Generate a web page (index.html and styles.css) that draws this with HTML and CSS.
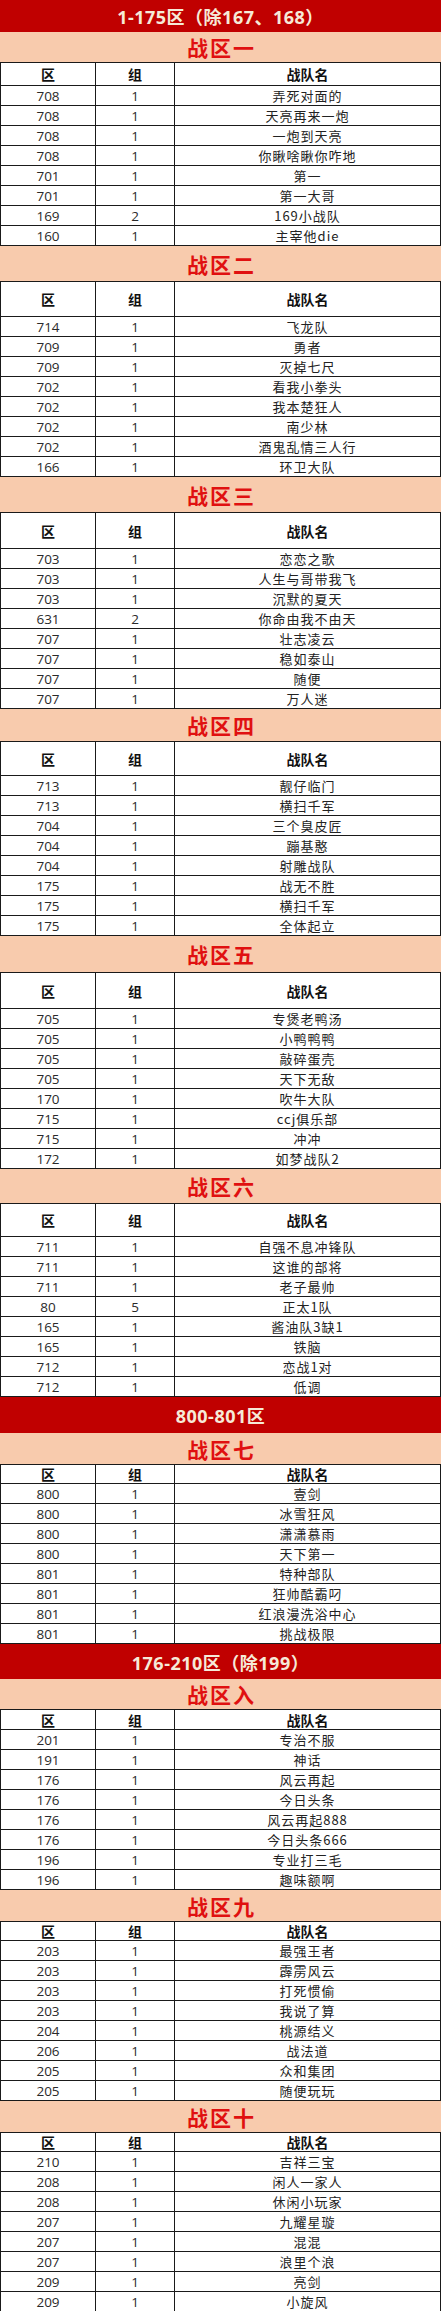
FILE: index.html
```html
<!DOCTYPE html>
<html lang="zh">
<head>
<meta charset="utf-8">
<title>战区分组</title>
<link rel="stylesheet" href="styles.css">
</head>
<body>
<div class="page">
  <div class="zone z32">1-175区（除167、168）</div>

  <section class="war">
    <div class="war-title p30">战区一</div>
    <div class="row head h24"><span>区</span><span>组</span><span>战队名</span></div>
    <div class="row"><span class="num">708</span><span class="num">1</span><span class="name">弄死对面的</span></div>
    <div class="row"><span class="num">708</span><span class="num">1</span><span class="name">天亮再来一炮</span></div>
    <div class="row"><span class="num">708</span><span class="num">1</span><span class="name">一炮到天亮</span></div>
    <div class="row"><span class="num">708</span><span class="num">1</span><span class="name">你瞅啥瞅你咋地</span></div>
    <div class="row"><span class="num">701</span><span class="num">1</span><span class="name">第一</span></div>
    <div class="row"><span class="num">701</span><span class="num">1</span><span class="name">第一大哥</span></div>
    <div class="row"><span class="num">169</span><span class="num">2</span><span class="name">169小战队</span></div>
    <div class="row"><span class="num">160</span><span class="num">1</span><span class="name">主宰他die</span></div>
  </section>

  <section class="war">
    <div class="war-title p35">战区二</div>
    <div class="row head h36"><span>区</span><span>组</span><span>战队名</span></div>
    <div class="row"><span class="num">714</span><span class="num">1</span><span class="name">飞龙队</span></div>
    <div class="row"><span class="num">709</span><span class="num">1</span><span class="name">勇者</span></div>
    <div class="row"><span class="num">709</span><span class="num">1</span><span class="name">灭掉七尺</span></div>
    <div class="row"><span class="num">702</span><span class="num">1</span><span class="name">看我小拳头</span></div>
    <div class="row"><span class="num">702</span><span class="num">1</span><span class="name">我本楚狂人</span></div>
    <div class="row"><span class="num">702</span><span class="num">1</span><span class="name">南少林</span></div>
    <div class="row"><span class="num">702</span><span class="num">1</span><span class="name">酒鬼乱情三人行</span></div>
    <div class="row"><span class="num">166</span><span class="num">1</span><span class="name">环卫大队</span></div>
  </section>

  <section class="war">
    <div class="war-title p35">战区三</div>
    <div class="row head h37"><span>区</span><span>组</span><span>战队名</span></div>
    <div class="row"><span class="num">703</span><span class="num">1</span><span class="name">恋恋之歌</span></div>
    <div class="row"><span class="num">703</span><span class="num">1</span><span class="name">人生与哥带我飞</span></div>
    <div class="row"><span class="num">703</span><span class="num">1</span><span class="name">沉默的夏天</span></div>
    <div class="row"><span class="num">631</span><span class="num">2</span><span class="name">你命由我不由天</span></div>
    <div class="row"><span class="num">707</span><span class="num">1</span><span class="name">壮志凌云</span></div>
    <div class="row"><span class="num">707</span><span class="num">1</span><span class="name">稳如泰山</span></div>
    <div class="row"><span class="num">707</span><span class="num">1</span><span class="name">随便</span></div>
    <div class="row"><span class="num">707</span><span class="num">1</span><span class="name">万人迷</span></div>
  </section>

  <section class="war">
    <div class="war-title p32">战区四</div>
    <div class="row head h35"><span>区</span><span>组</span><span>战队名</span></div>
    <div class="row"><span class="num">713</span><span class="num">1</span><span class="name">靓仔临门</span></div>
    <div class="row"><span class="num">713</span><span class="num">1</span><span class="name">横扫千军</span></div>
    <div class="row"><span class="num">704</span><span class="num">1</span><span class="name">三个臭皮匠</span></div>
    <div class="row"><span class="num">704</span><span class="num">1</span><span class="name">蹦基憨</span></div>
    <div class="row"><span class="num">704</span><span class="num">1</span><span class="name">射雕战队</span></div>
    <div class="row"><span class="num">175</span><span class="num">1</span><span class="name">战无不胜</span></div>
    <div class="row"><span class="num">175</span><span class="num">1</span><span class="name">横扫千军</span></div>
    <div class="row"><span class="num">175</span><span class="num">1</span><span class="name">全体起立</span></div>
  </section>

  <section class="war">
    <div class="war-title p36">战区五</div>
    <div class="row head h37"><span>区</span><span>组</span><span>战队名</span></div>
    <div class="row"><span class="num">705</span><span class="num">1</span><span class="name">专煲老鸭汤</span></div>
    <div class="row"><span class="num">705</span><span class="num">1</span><span class="name">小鸭鸭鸭</span></div>
    <div class="row"><span class="num">705</span><span class="num">1</span><span class="name">敲碎蛋壳</span></div>
    <div class="row"><span class="num">705</span><span class="num">1</span><span class="name">天下无敌</span></div>
    <div class="row"><span class="num">170</span><span class="num">1</span><span class="name">吹牛大队</span></div>
    <div class="row"><span class="num">715</span><span class="num">1</span><span class="name">ccj俱乐部</span></div>
    <div class="row"><span class="num">715</span><span class="num">1</span><span class="name">冲冲</span></div>
    <div class="row"><span class="num">172</span><span class="num">1</span><span class="name">如梦战队2</span></div>
  </section>

  <section class="war">
    <div class="war-title p34">战区六</div>
    <div class="row head h34"><span>区</span><span>组</span><span>战队名</span></div>
    <div class="row"><span class="num">711</span><span class="num">1</span><span class="name">自强不息冲锋队</span></div>
    <div class="row"><span class="num">711</span><span class="num">1</span><span class="name">这谁的部将</span></div>
    <div class="row"><span class="num">711</span><span class="num">1</span><span class="name">老子最帅</span></div>
    <div class="row"><span class="num">80</span><span class="num">5</span><span class="name">正太1队</span></div>
    <div class="row"><span class="num">165</span><span class="num">1</span><span class="name">酱油队3缺1</span></div>
    <div class="row"><span class="num">165</span><span class="num">1</span><span class="name">铁脑</span></div>
    <div class="row"><span class="num">712</span><span class="num">1</span><span class="name">恋战1对</span></div>
    <div class="row"><span class="num">712</span><span class="num">1</span><span class="name">低调</span></div>
  </section>

  <div class="zone z36">800-801区</div>

  <section class="war">
    <div class="war-title p31">战区七</div>
    <div class="row head h20"><span>区</span><span>组</span><span>战队名</span></div>
    <div class="row"><span class="num">800</span><span class="num">1</span><span class="name">壹剑</span></div>
    <div class="row"><span class="num">800</span><span class="num">1</span><span class="name">冰雪狂风</span></div>
    <div class="row"><span class="num">800</span><span class="num">1</span><span class="name">潇潇慕雨</span></div>
    <div class="row"><span class="num">800</span><span class="num">1</span><span class="name">天下第一</span></div>
    <div class="row"><span class="num">801</span><span class="num">1</span><span class="name">特种部队</span></div>
    <div class="row"><span class="num">801</span><span class="num">1</span><span class="name">狂帅酷霸叼</span></div>
    <div class="row"><span class="num">801</span><span class="num">1</span><span class="name">红浪漫洗浴中心</span></div>
    <div class="row"><span class="num">801</span><span class="num">1</span><span class="name">挑战极限</span></div>
  </section>

  <div class="zone z35">176-210区（除199）</div>

  <section class="war">
    <div class="war-title p30">战区入</div>
    <div class="row head h21"><span>区</span><span>组</span><span>战队名</span></div>
    <div class="row"><span class="num">201</span><span class="num">1</span><span class="name">专治不服</span></div>
    <div class="row"><span class="num">191</span><span class="num">1</span><span class="name">神话</span></div>
    <div class="row"><span class="num">176</span><span class="num">1</span><span class="name">风云再起</span></div>
    <div class="row"><span class="num">176</span><span class="num">1</span><span class="name">今日头条</span></div>
    <div class="row"><span class="num">176</span><span class="num">1</span><span class="name">风云再起888</span></div>
    <div class="row"><span class="num">176</span><span class="num">1</span><span class="name">今日头条666</span></div>
    <div class="row"><span class="num">196</span><span class="num">1</span><span class="name">专业打三毛</span></div>
    <div class="row"><span class="num">196</span><span class="num">1</span><span class="name">趣味额啊</span></div>
  </section>

  <section class="war">
    <div class="war-title p31">战区九</div>
    <div class="row head h20"><span>区</span><span>组</span><span>战队名</span></div>
    <div class="row"><span class="num">203</span><span class="num">1</span><span class="name">最强王者</span></div>
    <div class="row"><span class="num">203</span><span class="num">1</span><span class="name">霹雳风云</span></div>
    <div class="row"><span class="num">203</span><span class="num">1</span><span class="name">打死惯偷</span></div>
    <div class="row"><span class="num">203</span><span class="num">1</span><span class="name">我说了算</span></div>
    <div class="row"><span class="num">204</span><span class="num">1</span><span class="name">桃源结义</span></div>
    <div class="row"><span class="num">206</span><span class="num">1</span><span class="name">战法道</span></div>
    <div class="row"><span class="num">205</span><span class="num">1</span><span class="name">众和集团</span></div>
    <div class="row"><span class="num">205</span><span class="num">1</span><span class="name">随便玩玩</span></div>
  </section>

  <section class="war">
    <div class="war-title p31">战区十</div>
    <div class="row head h20"><span>区</span><span>组</span><span>战队名</span></div>
    <div class="row"><span class="num">210</span><span class="num">1</span><span class="name">吉祥三宝</span></div>
    <div class="row"><span class="num">208</span><span class="num">1</span><span class="name">闲人一家人</span></div>
    <div class="row"><span class="num">208</span><span class="num">1</span><span class="name">休闲小玩家</span></div>
    <div class="row"><span class="num">207</span><span class="num">1</span><span class="name">九耀星璇</span></div>
    <div class="row"><span class="num">207</span><span class="num">1</span><span class="name">混混</span></div>
    <div class="row"><span class="num">207</span><span class="num">1</span><span class="name">浪里个浪</span></div>
    <div class="row"><span class="num">209</span><span class="num">1</span><span class="name">亮剑</span></div>
    <div class="row"><span class="num">209</span><span class="num">1</span><span class="name">小旋风</span></div>
  </section>
</div>
</body>
</html>
```

FILE: styles.css
```css
html, body {
  margin: 0;
  padding: 0;
  background: #ffffff;
}

.page {
  width: 441px;
  font-family: "Noto Sans CJK SC", "Noto Sans", sans-serif;
  color: #222;
}

.zone {
  background: #c00000;
  color: #f6ead8;
  font-family: "Open Sans", "Noto Sans CJK SC", sans-serif;
  font-weight: 700;
  font-size: 18px;
  letter-spacing: 0.5px;
  display: flex;
  align-items: center;
  justify-content: center;
}

.z32 { height: 32px; }
.z35 { height: 35px; }
.z36 { height: 36px; }

.war-title {
  background: #f8cbad;
  color: #e01010;
  font-family: "Noto Sans CJK SC", sans-serif;
  font-weight: 700;
  font-size: 21px;
  letter-spacing: 2px;
  display: flex;
  align-items: center;
  justify-content: center;
  padding-left: 2px;
  box-sizing: border-box;
}

.p30 { height: 30px; }
.p31 { height: 31px; }
.p32 { height: 32px; }
.p34 { height: 34px; }
.p35 { height: 35px; }
.p36 { height: 36px; }

.row {
  display: grid;
  grid-template-columns: 95px 79px 1fr;
  height: 20px;
  box-sizing: border-box;
  border-left: 1px solid #1a1a1a;
  border-right: 1px solid #1a1a1a;
  border-bottom: 1px solid #1a1a1a;
}

.row > span {
  display: flex;
  align-items: center;
  justify-content: center;
  white-space: nowrap;
  overflow: hidden;
}

.row > span:nth-child(1),
.row > span:nth-child(2) {
  border-right: 1px solid #1a1a1a;
}

.head {
  border-top: 1px solid #1a1a1a;
  font-weight: 700;
  font-size: 14px;
  color: #111;
}

.h20 { height: 20px; }
.h21 { height: 21px; }
.h24 { height: 24px; }
.h34 { height: 34px; }
.h35 { height: 35px; }
.h36 { height: 36px; }
.h37 { height: 37px; }

.num {
  font-family: "Open Sans", "Liberation Sans", sans-serif;
  font-size: 13.5px;
  color: #2a2a2a;
}

.name {
  font-family: "Noto Sans CJK SC", sans-serif;
  font-size: 13px;
  letter-spacing: 1px;
  color: #222;
}
```
